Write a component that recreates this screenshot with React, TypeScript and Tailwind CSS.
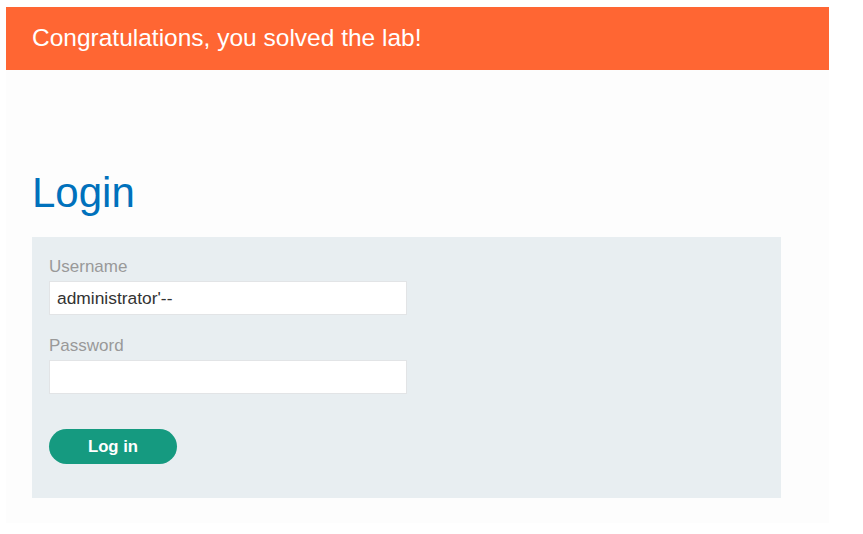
import React from 'react';

export default function App() {
  return (
    <div className="min-h-[534px] w-full bg-white pt-[7px] px-[6px] font-['Liberation_Sans',Arial,sans-serif]">
      <div className="w-[823px]">
        <div className="h-[63px] bg-[#ff6633] flex items-center px-[26px]">
          <h4 className="text-white text-[24.5px] leading-none">Congratulations, you solved the lab!</h4>
        </div>

        <div className="bg-[#fdfdfd] px-[26px] pt-[98px] pb-[25px] h-[453px]">
          <h1 className="text-[#0071bc] text-[42px] leading-[50px] mb-[19px]">Login</h1>

          <form
            className="w-[749px] bg-[#e8eef1] px-[17px] pt-[20px] pb-[34px]"
            onSubmit={(e) => e.preventDefault()}
          >
            <label className="block text-[#999] text-[17px] leading-[20px] mb-[4px]">Username</label>
            <input
              type="text"
              defaultValue="administrator'--"
              className="block w-[358px] h-[34px] bg-white border border-[#e2e4e6] px-[7px] text-[17.4px] text-[#333] outline-none"
            />

            <label className="block text-[#999] text-[17px] leading-[20px] mt-[21px] mb-[4px]">Password</label>
            <input
              type="password"
              className="block w-[358px] h-[34px] bg-white border border-[#e2e4e6] px-[7px] text-[17px] text-[#333] outline-none"
            />

            <button
              type="submit"
              className="mt-[35px] w-[128px] h-[35px] rounded-full bg-[#159a80] text-white font-bold text-[16.7px]"
            >
              Log in
            </button>
          </form>
        </div>
      </div>
    </div>
  );
}
